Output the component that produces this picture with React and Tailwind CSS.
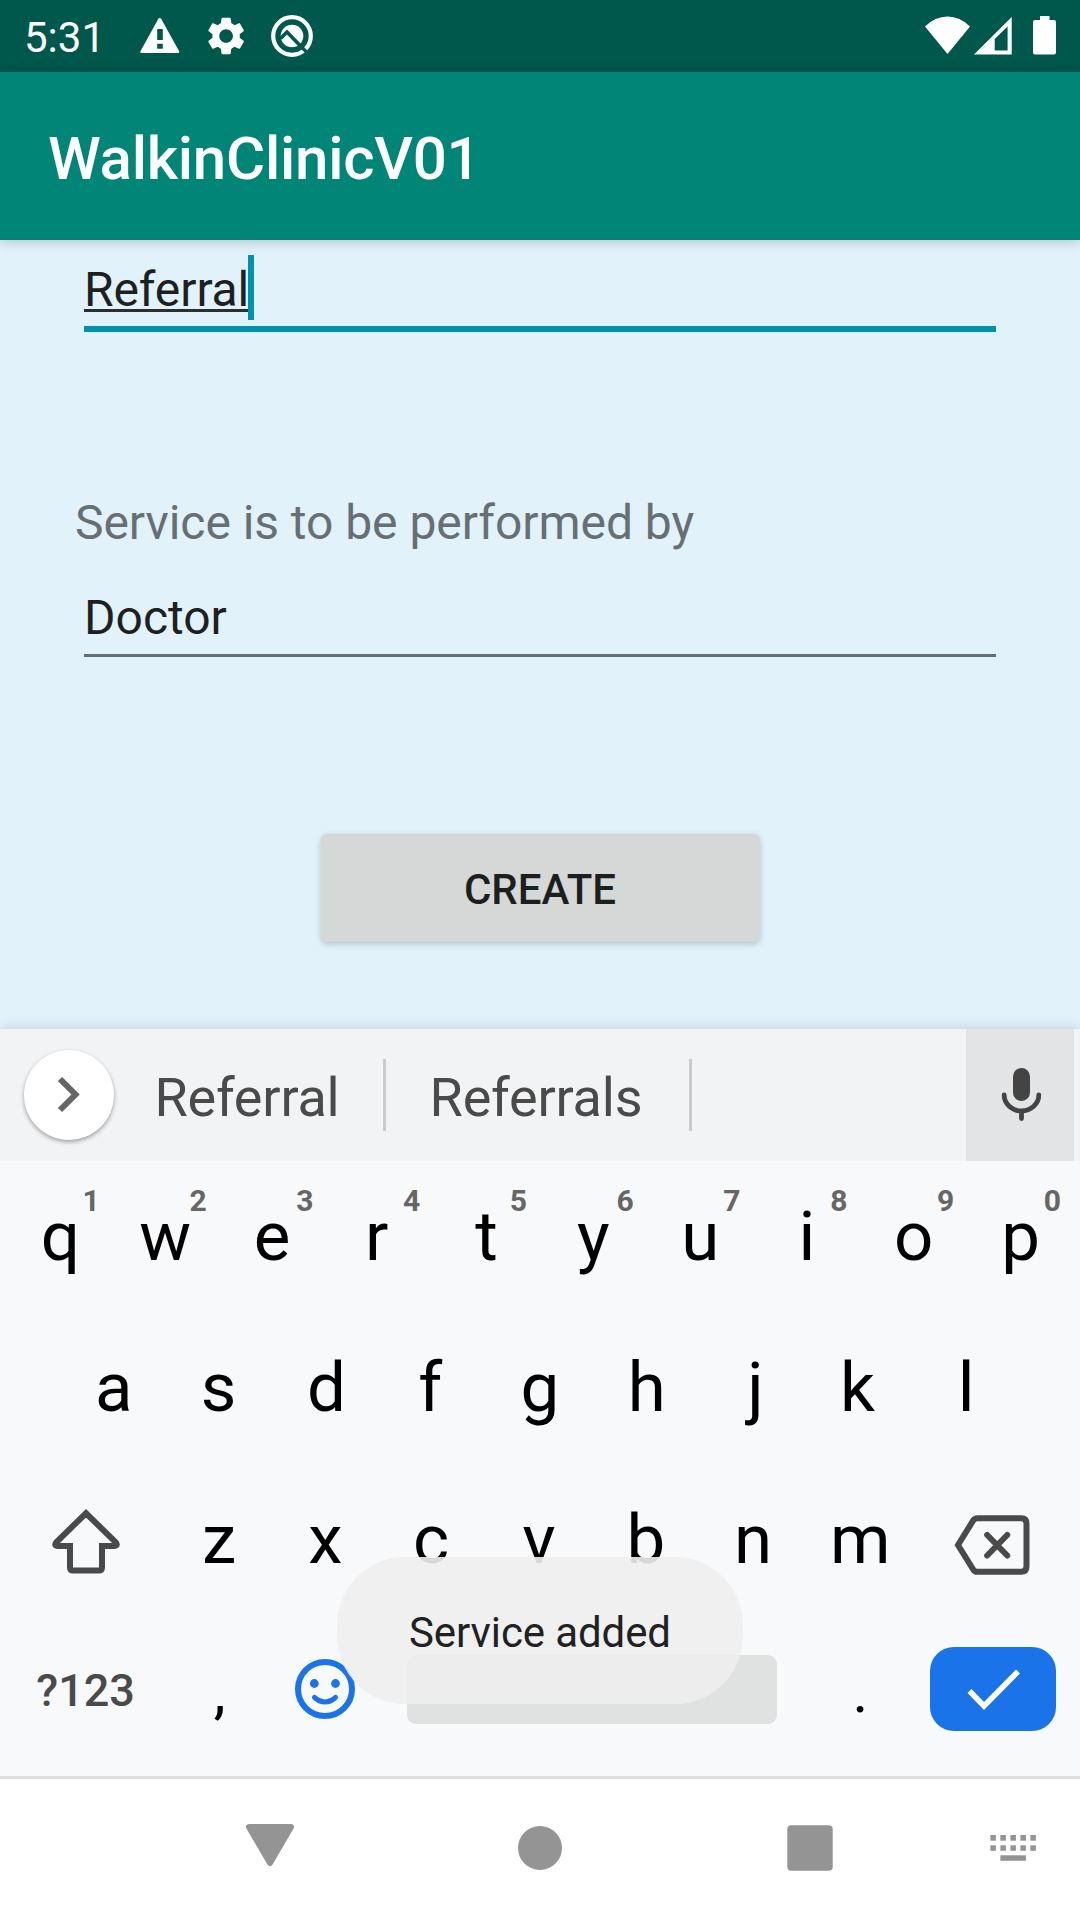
function StatusBar() {
  return (
    <header className="flex h-[72px] items-center justify-between bg-[#00574b] pl-[24px] text-white">
      <div className="flex items-center">
        <span className="w-[109px] pt-[3px] text-[42px] leading-[66px]">5:31</span>
        <svg width="200" height="72" viewBox="133 0 200 72" fill="white">
          <path fillRule="evenodd" d="M161 18.500 L179.300 51.500 Q179.600 53 178 53 H141.500 Q140 53 140.300 51.500 L158.500 18.500 Q159.700 17.300 161 18.500Z M157.200 29 V40 H162.800 V29Z M157.200 43.700 V48.700 H162.800 V43.700Z" />
          <path
            transform="translate(203.300 13.200) scale(1.9)"
            d="M19.140 12.940c.04-.3.06-.61.06-.94 0-.32-.02-.64-.07-.94l2.030-1.580c.18-.14.23-.41.12-.61l-1.920-3.320c-.12-.22-.37-.29-.59-.22l-2.390.96c-.5-.38-1.030-.7-1.620-.94l-.36-2.540c-.04-.24-.24-.41-.48-.41h-3.840c-.24 0-.43.17-.47.41l-.36 2.540c-.59.24-1.130.57-1.620.94l-2.390-.96c-.22-.08-.47 0-.59.22L2.740 8.870c-.12.21-.08.47.12.61l2.030 1.580c-.05.3-.09.63-.09.94s.02.64.07.94l-2.030 1.580c-.18.14-.23.41-.12.61l1.920 3.320c.12.22.37.29.59.22l2.390-.96c.5.38 1.030.7 1.620.94l.36 2.540c.05.24.24.41.48.41h3.840c.24 0 .44-.17.47-.41l.36-2.540c.59-.24 1.130-.56 1.620-.94l2.390.96c.22.08.47 0 .59-.22l1.920-3.320c.12-.22.07-.47-.12-.61l-2.010-1.580zM12 15.600c-1.980 0-3.600-1.620-3.600-3.600s1.620-3.600 3.600-3.600 3.600 1.620 3.600 3.600-1.620 3.600-3.600 3.600z"
          />
          <circle cx="292" cy="36" r="18.800" fill="none" stroke="white" strokeWidth="4.200" />
          <circle cx="292" cy="36" r="11.300" />
          <path d="M280.500 38.500 L287 32 L300 45.500" fill="none" stroke="#00574b" strokeWidth="3.600" />
          <path d="M301.500 47 L308 53.500" fill="none" stroke="#00574b" strokeWidth="3.200" />
        </svg>
      </div>
      <svg width="160" height="72" viewBox="920 0 160 72" fill="white">
        <path d="M947.500 54 L925 26.500 Q935 16.500 947.500 16.500 T970 26.500Z" />
        <path fillRule="evenodd" d="M1011.700 17 V54.500 H974Z M1007.600 26.500 L994.700 39 V50.500 H1007.600Z" />
        <path d="M1040 16 H1049.500 V20 H1054 Q1056 20 1056 22 V52.500 Q1056 54.500 1054 54.500 H1035 Q1033 54.500 1033 52.500 V22 Q1033 20 1035 20 H1040Z" />
      </svg>
    </header>
  );
}

function Suggestions() {
  return (
    <div className="relative flex h-[132px] items-center bg-[#f1f3f4] pr-[6px] pl-[24px] text-[54px] tracking-[-0.2px] text-[#4a4a4a] shadow-[0_-2px_12px_rgba(0,0,0,0.12)]">
      <div className="flex size-[90px] items-center justify-center rounded-full bg-white shadow-[0_2px_4px_rgba(0,0,0,0.35)]">
        <svg width="90" height="90" fill="none" stroke="#666" strokeWidth="6">
          <path d="M36 29 L51.500 44.500 L36 60" />
        </svg>
      </div>
      <span className="w-[269px] pt-[5px] pr-[3px] text-center leading-[60px]">Referral</span>
      <i className="h-[72px] w-[3px] bg-[#c8cacb]" />
      <span className="w-[303px] pt-[5px] pr-[3px] text-center leading-[60px]">Referrals</span>
      <i className="h-[72px] w-[3px] bg-[#c8cacb]" />
      <div className="ml-auto h-full w-[108px] bg-[#e2e4e5]">
        <svg width="108" height="132" viewBox="966 1029 108 132" fill="none" stroke="#444" strokeLinecap="round">
          <rect x="1013" y="1068" width="17" height="33" rx="8.500" fill="#444" stroke="none" />
          <path d="M1004.200 1095 A17.300 16 0 0 0 1038.800 1095 M1021.500 1111 V1118.500" strokeWidth="4.800" />
        </svg>
      </div>
    </div>
  );
}

const letter = 'block pt-[2px] text-center text-[69px] leading-[80px] text-black w-[106.8px]';
const mark = 'block pt-[5px] text-center text-[60px] leading-[80px] text-black w-[106.8px]';

// Optical centring of single glyphs, in pixels.
const shift = { q: 1, w: -1, e: -1, r: -3, a: 1, s: -1, f: -3, j: 2, k: -3, l: -1, z: -0.5, x: -1, c: -2, v: -1, b: -1, n: -0.5 };

function Key({ c }) {
  return (
    <span className={letter} style={{ textIndent: 2 * (shift[c] || 0) }}>
      {c}
    </span>
  );
}

function Keyboard() {
  return (
    <section className="relative h-[615px] bg-[#f8f9fb] px-[6px]">
      <div className="flex h-[151px] pt-[34px]">
        {[...'qwertyuiop'].map((c, i) => (
          <div key={c} className="relative">
            <Key c={c} />
            <span className="absolute -top-[12px] right-[13px] text-[30px] leading-[36px] font-bold text-[#666]">{(i + 1) % 10}</span>
          </div>
        ))}
      </div>
      <div className="flex h-[152px] justify-center pt-[34px]">
        {[...'asdfghjkl'].map((c) => (
          <Key key={c} c={c} />
        ))}
      </div>
      <div className="flex h-[152px] pt-[34px]">
        <svg width="160.200" height="100" viewBox="6 1498 160.200 100" fill="none" stroke="#4a4a4a" strokeWidth="6">
          <path d="M70 1546 H57.500 Q53.500 1545.500 56.500 1542 L86 1513.300 L115.500 1542 Q118.500 1545.500 114.500 1546 H102 V1567.500 Q102 1570.500 99 1570.500 H73 Q70 1570.500 70 1567.500 V1543" />
        </svg>
        {[...'zxcvbnm'].map((c) => (
          <Key key={c} c={c} />
        ))}
        <svg width="160.200" height="100" viewBox="913.800 1498 160.200 100" fill="none" stroke="#4a4a4a" strokeWidth="6" strokeLinecap="round">
          <path d="M957.800 1545 L973 1520.500 Q974.500 1518.300 977 1518.300 H1021 Q1026.300 1518.300 1026.300 1523.500 V1566.500 Q1026.300 1571.800 1021 1571.800 H977 Q974.500 1571.800 973 1569.500Z" />
          <path d="M987 1535 L1007 1555.500 M1007 1535 L987 1555.500" />
        </svg>
      </div>
      <div className="flex h-[160px] items-start pt-[31px]">
        <span className="w-[160.2px] pt-[14px] pr-[1px] text-center text-[45px] leading-[60px] font-medium text-[#4a4a4a]">?123</span>
        <span className={mark}>,</span>
        <svg width="106.800" height="84" viewBox="273 1647 106.800 84" fill="none" stroke="#1a73e8" strokeWidth="6" strokeLinecap="round">
          <circle cx="325" cy="1689" r="27" />
          <path d="M314.500 1697.500 Q325 1706.500 335.500 1697.500" strokeWidth="5" />
          <circle cx="314.300" cy="1683.500" r="4.400" fill="#1a73e8" stroke="none" />
          <circle cx="335.500" cy="1683.500" r="4.400" fill="#1a73e8" stroke="none" />
        </svg>
        <div className="mt-[8px] mr-[30.2px] ml-[27px] h-[69px] w-[370px] rounded-[9px] bg-[#e0e2e1]" />
        <span className={mark}>.</span>
        <div className="ml-[16px] flex h-[84px] w-[126px] rounded-[24px] bg-[#1a73e8]">
          <svg width="126" height="84" viewBox="930 1647 126 84" fill="none" stroke="white" strokeWidth="5.500">
            <path d="M969.500 1691 L984 1706 L1018 1671.500" />
          </svg>
        </div>
      </div>
    </section>
  );
}

function NavBar() {
  return (
    <nav className="h-[144px] border-t-3 border-[#dedfdf] bg-white">
      <svg width="1080" height="141" viewBox="0 1779 1080 141" fill="#949494">
        <path d="M249 1827 H291 L270 1863Z" stroke="#949494" strokeWidth="6" strokeLinejoin="round" />
        <circle cx="540" cy="1848" r="22" />
        <rect x="787.300" y="1825.300" width="45.400" height="45.400" rx="4" />
        {[990.4, 1000.4, 1010.4, 1020.4, 1030.4].map((x) => (
          <g key={x}>
            <rect x={x} y="1835" width="5.500" height="5.700" />
            <rect x={x} y="1845.300" width="5.500" height="5.500" />
          </g>
        ))}
        <rect x="1000.400" y="1855.300" width="25.500" height="5.500" />
      </svg>
    </nav>
  );
}

export default function App() {
  return (
    <div className={'relative h-[1920px] w-[1080px] overflow-hidden bg-[#e1f2fb] font-["Roboto",sans-serif]'}>
      <StatusBar />
      <div className="relative flex h-[168px] items-center bg-[#008577] pt-[5px] pl-[48px] text-[60px] leading-[70px] font-medium tracking-[-0.25px] text-white shadow-[0_2px_12px_rgba(0,0,0,0.2)]">
        WalkinClinicV01
      </div>
      <main className="h-[789px] px-[84px] pt-[15px]">
        <div className="flex h-[77px] border-b-6 border-[#0091ad] text-[48px] tracking-[-0.1px] text-[#1d1f21]">
          <span className="mt-[5px] h-[52px] w-[165px] border-b-3 border-[#2c2f30] leading-[60px]">Referral</span>
          <i className="-ml-px h-[65px] w-[6px] bg-[#0091ad]" />
        </div>
        <p className="-ml-[9px] pt-[161px] text-[48px] leading-[60px] tracking-[-0.05px] text-[#686f73]">Service is to be performed by</p>
        <div className="mt-[26px] h-[78px] border-b-3 border-[#686f73] pt-[9px] text-[48px] leading-[60px] text-[#1d1f21]">Doctor</div>
        <button className="mx-auto mt-[177px] block h-[108px] w-[439px] rounded-[6px] bg-[#d6d8d7] pt-[2px] text-[42px] font-medium text-[#1d1f1f] shadow-[0_2px_6px_rgba(0,0,0,0.2)]">
          CREATE
        </button>
      </main>
      <Suggestions />
      <Keyboard />
      <NavBar />
      <div className="absolute top-[1557px] left-[337px] flex h-[147px] w-[406px] items-center justify-center rounded-[68px] bg-[#eeeeee]/90 pt-[4px] text-[42px] tracking-[-0.1px] text-[#202222]">
        Service added
      </div>
    </div>
  );
}
